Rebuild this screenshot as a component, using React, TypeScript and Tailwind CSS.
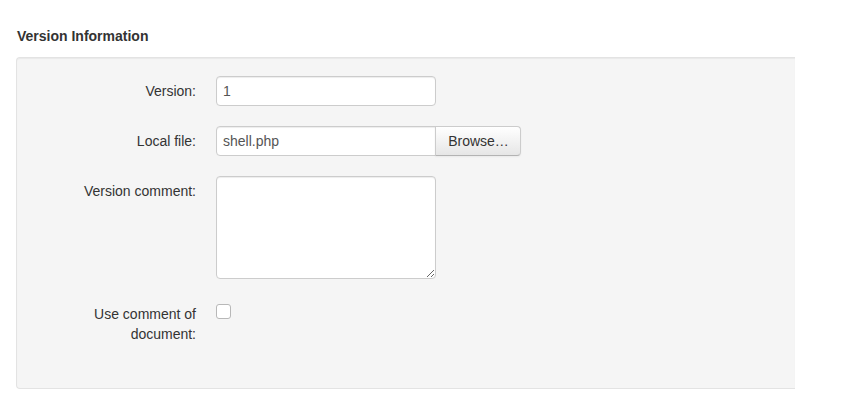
export default function App() {
  return (
    <div className="w-[841px] h-[404px] bg-white text-[14px] leading-[20px] text-[#333] font-['Liberation_Sans',Arial,sans-serif] overflow-hidden">
      <div className="pt-[26px] pl-[17px] font-bold">Version Information</div>
      <div className="ml-[16px] mt-[11px] w-[779px] h-[332px] bg-[#f5f5f5] border border-[#e3e3e3] border-r-0 rounded-l-[4px] shadow-[inset_0_1px_1px_rgba(0,0,0,0.05)] pt-[18px] pl-[19px]">
        <div className="flex mb-[20px]">
          <label className="w-[160px] pt-[5px] text-right shrink-0">Version:</label>
          <div className="ml-[20px]">
            <input
              defaultValue="1"
              className="w-[220px] h-[30px] px-[6px] bg-white border border-[#ccc] rounded-[4px] text-[#555] shadow-[inset_0_1px_1px_rgba(0,0,0,0.075)] outline-none"
            />
          </div>
        </div>
        <div className="flex mb-[20px]">
          <label className="w-[160px] pt-[5px] text-right shrink-0">Local file:</label>
          <div className="ml-[20px] flex">
            <input
              defaultValue="shell.php"
              className="w-[220px] h-[30px] px-[6px] bg-white border border-[#ccc] rounded-l-[4px] text-[#555] shadow-[inset_0_1px_1px_rgba(0,0,0,0.075)] outline-none"
            />
            <button className="w-[86px] h-[30px] -ml-px pl-px border border-[#ccc] border-b-[#b3b3b3] rounded-r-[4px] bg-gradient-to-b from-white to-[#e6e6e6] text-[#333] shadow-[inset_0_1px_0_rgba(255,255,255,0.2),0_1px_2px_rgba(0,0,0,0.05)]">
              Browse…
            </button>
          </div>
        </div>
        <div className="flex mb-[20px]">
          <label className="w-[160px] pt-[5px] text-right shrink-0">Version comment:</label>
          <div className="ml-[20px]">
            <textarea className="block w-[220px] h-[103px] px-[6px] py-[4px] bg-white border border-[#ccc] rounded-[4px] text-[#555] shadow-[inset_0_1px_1px_rgba(0,0,0,0.075)] outline-none" />
          </div>
        </div>
        <div className="flex">
          <label className="w-[160px] pt-[5px] text-right shrink-0">
            Use comment of
            <br />
            document:
          </label>
          <div className="ml-[20px] pt-[5px]">
            <input type="checkbox" className="block w-[15px] h-[15px] mt-0 appearance-none bg-white border border-[#b8b8b8] rounded-[3px]" />
          </div>
        </div>
      </div>
    </div>
  );
}
